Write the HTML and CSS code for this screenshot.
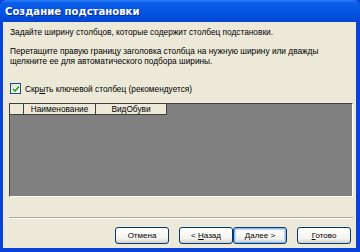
FILE: index.html
```html
<!DOCTYPE html>
<html lang="ru">
<head>
  <meta charset="UTF-8">
  <title>Создание подстановки</title>
  <link rel="stylesheet" href="styles.css">
</head>
<body>
  <div class="window">
    <div class="titlebar">Создание подстановки</div>
    <div class="content">
      <p class="intro">Задайте ширину столбцов, которые содержит столбец подстановки.</p>
      <p class="hint">Перетащите правую границу заголовка столбца на нужную ширину или дважды<br>щелкните ее для автоматического подбора ширины.</p>
      <label class="check">
        <span class="box">
          <svg width="8" height="8" viewBox="0 0 8 8"><path d="M1 4 L3 6 L7 1.5" fill="none" stroke="#21a121" stroke-width="1.6"/></svg>
        </span>
        <span>Скр<u>ы</u>ть ключевой столбец (рекомендуется)</span>
      </label>
      <div class="grid">
        <div class="grid-head">
          <div class="cell selector"></div>
          <div class="cell name">Наименование</div>
          <div class="cell kind">ВидОбуви</div>
        </div>
      </div>
      <div class="separator"></div>
      <div class="buttons">
        <button type="button">Отмена</button>
        <div class="pair">
          <button type="button">&lt; <u>Н</u>азад</button>
          <button type="button" class="default"><u>Д</u>алее &gt;</button>
        </div>
        <button type="button"><u>Г</u>отово</button>
      </div>
    </div>
  </div>
</body>
</html>
```

FILE: styles.css
```css
body {
  margin: 0;
  font-family: "Liberation Sans", Tahoma, sans-serif;
  font-size: 8.3px;
  color: #000;
}
.window {
  width: 360px;
  height: 252px;
  box-sizing: border-box;
  background: #0842d6;
  display: flex;
  flex-direction: column;
  padding: 0 4px 4px 3px;
}
.titlebar {
  height: 22px;
  margin: 0 -4px 0 -3px;
  padding-left: 5px;
  display: flex;
  align-items: center;
  color: #fff;
  font-family: "DejaVu Sans", Tahoma, sans-serif;
  font-weight: bold;
  font-size: 10.1px;
  background: linear-gradient(#2b7cf6 0, #0a5ee9 3px, #0454e2 12px, #0249d6 20px, #0842d6 22px);
  border-radius: 6px 6px 0 0;
  text-shadow: 1px 1px 0 #0a2a8a;
}
.content {
  flex: 1;
  background: #ece9d8;
  padding: 5px 3px 0 7px;
  display: flex;
  flex-direction: column;
}
p {
  margin: 0;
  line-height: 10px;
}
.hint {
  margin-top: 9px;
}
.check {
  display: flex;
  align-items: center;
  gap: 4px;
  margin-top: 17px;
}
.box {
  width: 9px;
  height: 9px;
  border: 1px solid #1c5180;
  background: linear-gradient(135deg, #dcdcd7, #fff);
  display: flex;
  align-items: center;
  justify-content: center;
}
.grid {
  margin: 9px 0 0 -1px;
  height: 92px;
  background: #808080;
  border-top: 1px solid #404040;
  border-left: 1px solid #404040;
  border-right: 1px solid #fff;
  border-bottom: 1px solid #fff;
}
.grid-head {
  display: flex;
  height: 11px;
}
.cell {
  background: #ece9d8;
  border-right: 1px solid #404040;
  border-bottom: 1px solid #404040;
  display: flex;
  align-items: center;
  justify-content: center;
}
.selector {
  width: 13px;
}
.name {
  width: 71px;
}
.kind {
  width: 70px;
}
.separator {
  margin: 20px 0 0 -1px;
  border-top: 1px solid #aca899;
  border-bottom: 1px solid #fff;
}
.buttons {
  display: flex;
  justify-content: flex-end;
  gap: 10px;
  margin-top: 8px;
  padding-right: 2px;
}
.pair {
  display: flex;
}
button {
  width: 54px;
  height: 17px;
  padding: 0;
  font-family: inherit;
  font-size: 8px;
  color: #000;
  background: linear-gradient(#fff, #f4f3ee 70%, #d6d0c5);
  border: 1px solid #003c74;
  border-radius: 3px;
}
.default {
  box-shadow: inset 0 0 0 1px #98b8ea, inset 0 0 0 2px #c1d6f7;
}
```
